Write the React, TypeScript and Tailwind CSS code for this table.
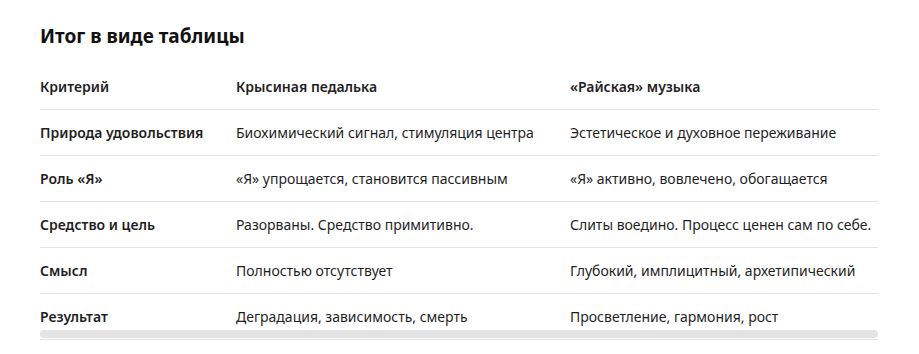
import React from 'react';

const rows: [string, string, string][] = [
  ['Природа удовольствия', 'Биохимический сигнал, стимуляция центра', 'Эстетическое и духовное переживание'],
  ['Роль «Я»', '«Я» упрощается, становится пассивным', '«Я» активно, вовлечено, обогащается'],
  ['Средство и цель', 'Разорваны. Средство примитивно.', 'Слиты воедино. Процесс ценен сам по себе.'],
  ['Смысл', 'Полностью отсутствует', 'Глубокий, имплицитный, архетипический'],
  ['Результат', 'Деградация, зависимость, смерть', 'Просветление, гармония, рост'],
];

const grid = 'grid grid-cols-[196px_334px_1fr] items-center h-[46px] border-b border-[#e3e3e3]';

export default function App() {
  return (
    <div className="min-h-[354px] w-[919px] bg-white pl-10 pr-[41px] pt-[22px] text-[#1f1f1f] font-['Noto_Sans',sans-serif]">
      <h2 className="text-[19px] font-bold leading-[28px] text-[#111]">Итог в виде таблицы</h2>

      <div className="relative mt-[14px] overflow-hidden">
        <div className={`${grid} text-[14px] font-semibold`}>
          <div>Критерий</div>
          <div>Крысиная педалька</div>
          <div>«Райская» музыка</div>
        </div>
        {rows.map(([label, rat, music]) => (
          <div key={label} className={`${grid} text-[14px]`}>
            <div className="font-semibold">{label}</div>
            <div className="whitespace-nowrap">{rat}</div>
            <div className="whitespace-nowrap">{music}</div>
          </div>
        ))}
        {/* overlay scrollbar thumb */}
        <div className="absolute bottom-[2px] left-0 right-0 h-[8px] rounded-full bg-[#e4e4e4]" />
      </div>
    </div>
  );
}
